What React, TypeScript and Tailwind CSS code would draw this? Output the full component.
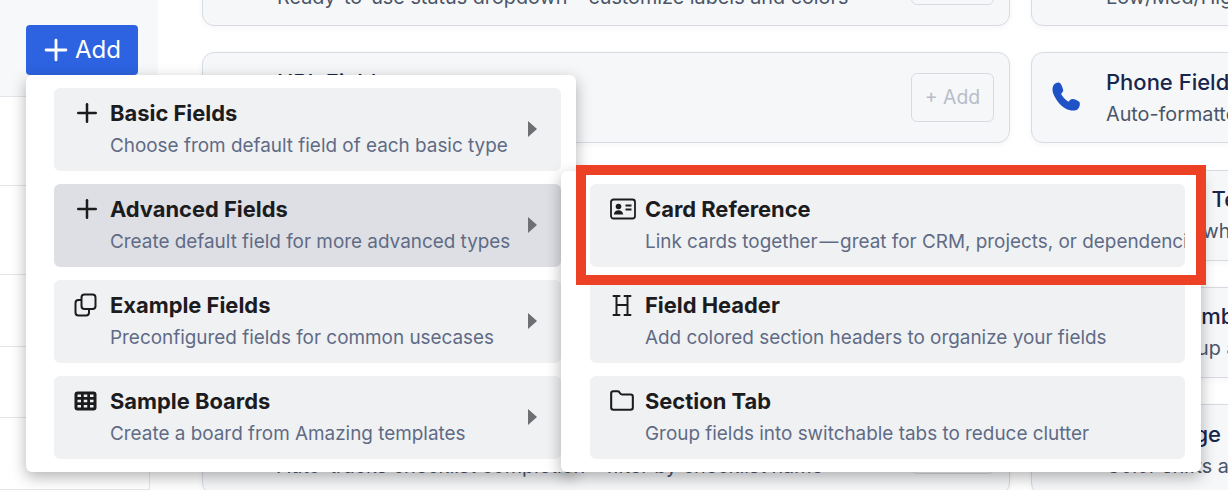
import React from 'react';
import { Plus, Folder } from 'lucide-react';

const CardIdIcon = () => (
  <svg width="26" height="22" viewBox="0 0 26 22" fill="none">
    <rect x="1" y="1.5" width="24" height="19" rx="2.5" stroke="currentColor" strokeWidth="1.8" />
    <circle cx="8.5" cy="8.5" r="2.8" fill="currentColor" />
    <path d="M3.8 16.5c.5-3 2.3-4.3 4.7-4.3s4.2 1.3 4.7 4.3z" fill="currentColor" />
    <path d="M15.5 7.5h6M15.5 11.5h6" stroke="currentColor" strokeWidth="1.8" />
  </svg>
);

const GridIcon = () => (
  <svg width="23" height="20" viewBox="0 0 23 20" fill="none">
    <rect x="0.5" y="0.5" width="22" height="19" rx="3" fill="currentColor" />
    <path d="M3.500 3.500h3.500v2.500H3.500zM9.750 3.500h3.500v2.500H9.750zM16 3.500h3.500v2.500H16zM3.500 8.750h3.500v2.500H3.500zM9.750 8.750h3.500v2.500H9.750zM16 8.750h3.500v2.500H16zM3.500 14h3.500v2.500H3.500zM9.750 14h3.500v2.500H9.750zM16 14h3.500v2.500H16z" fill="#f0f1f3" />
  </svg>
);

const CopyIcon = () => (
  <svg width="23" height="24" viewBox="0 0 23 24" fill="none" stroke="currentColor" strokeWidth="2">
    <rect x="7.500" y="1.500" width="14" height="14.500" rx="3" />
    <path d="M7 7H4.500A3 3 0 0 0 1.500 10v9.500a3 3 0 0 0 3 3h7.500a3 3 0 0 0 3-3V17" />
  </svg>
);

const SerifH = () => (
  <svg width="22" height="23" viewBox="0 0 22 23" fill="none" stroke="currentColor" strokeWidth="2" strokeLinecap="round">
    <path d="M5.500 2v19M16.500 2v19M5.500 11h11M2.500 2h6M13.500 2h6M2.500 21h6M13.500 21h6" />
  </svg>
);

const PhoneIcon = () => (
  <svg width="28" height="29" viewBox="0 0 27 28" fill="#1f51c7">
    <path d="M2 2.500C3.500 1 6 0 7.500 1C9 2 10.500 6 10.800 8C11 9.500 9.500 10.500 8.800 11.500C10 14 13 17.500 16 19C17 18 18 16.500 19.500 16.500C21.500 16.500 25.500 18 26.500 19.500C27.500 21 26.500 25 24.500 26.500C22.500 28 17 28 13 25.500C8 22.500 3 16.500 1 10.500C0 7.500 .5 4 2 2.500Z" />
  </svg>
);

type Row = { icon: React.ReactNode; title: string; desc: string; arrow?: boolean; active?: boolean };

const leftRows: Row[] = [
  { icon: <Plus size={30} strokeWidth={2} className="-ml-[2px] shrink-0" />, title: 'Basic Fields', desc: 'Choose from default field of each basic type', arrow: true },
  { icon: <Plus size={30} strokeWidth={2} className="-ml-[2px] shrink-0" />, title: 'Advanced Fields', desc: 'Create default field for more advanced types', arrow: true, active: true },
  { icon: <CopyIcon />, title: 'Example Fields', desc: 'Preconfigured fields for common usecases', arrow: true },
  { icon: <GridIcon />, title: 'Sample Boards', desc: 'Create a board from Amazing templates', arrow: true },
];

const rightRows: Row[] = [
  { icon: <CardIdIcon />, title: 'Card Reference', desc: 'Link cards together\u200a\u2014\u200agreat for CRM, projects, or dependencies' },
  { icon: <span className="pl-[1px]"><SerifH /></span>, title: 'Field Header', desc: 'Add colored section headers to organize your fields' },
  { icon: <Folder size={26} strokeWidth={1.9} className="-ml-[1px] shrink-0" />, title: 'Section Tab', desc: 'Group fields into switchable tabs to reduce clutter' },
];

const MenuRow = ({ row, sub }: { row: Row; sub?: boolean }) => (
  <div className={`relative h-[83px] overflow-hidden rounded-md pl-5 pt-[10px] ${row.active ? 'bg-[#dedfe4]' : 'bg-[#f0f1f3]'}`}>
    <div className="flex h-[30px] items-center text-[#1c1c1e]">
      <span className={`flex shrink-0 items-center ${sub ? 'w-[35px]' : 'w-[36px]'}`}>{row.icon}</span>
      <span className="text-[21.9px] font-bold leading-[30px]">{row.title}</span>
    </div>
    <div className={`mt-[3px] whitespace-nowrap text-[18.9px] leading-[30px] text-[#5f6b85] ${sub ? 'pl-[35px]' : 'pl-[36px]'}`}>{row.desc}</div>
    {row.arrow && <span className="absolute right-6 top-[33px] h-0 w-0 border-y-[8px] border-l-[9px] border-y-transparent border-l-[#6f6f73]" />}
  </div>
);

const cards = [
  { title: 'Status Field', desc: 'Ready-to-use status dropdown \u2013 customize labels and colors' },
  { title: 'Priority Field', desc: 'Low/Med/High priority labels' },
  { title: 'URL Field', desc: 'Clickable links' },
  { title: 'Phone Field', desc: 'Auto-formatted phone numbers', phone: true },
  { title: 'Email Field', desc: 'Validated addresses' },
  { title: 'Multi-line Text', desc: 'Show just when needed' },
  { title: 'Date Field', desc: 'Pick a day' },
  { title: 'Serial Number', desc: 'Numbers up automatically' },
  { title: 'Checklist Progress', desc: 'Auto-tracks checklist completion \u2013 filter by checklist name' },
  { title: 'Age Badge', desc: 'Color shifts as cards get older' },
];

const FieldCard = ({ title, desc, phone }: { title: string; desc: string; phone?: boolean }) => (
  <div className="flex h-[91px] items-center rounded-xl border border-[#d8dbe4] bg-[#f6f7f9] pr-[15px] shadow-[0_2px_6px_rgba(0,0,0,0.04)]">
    <div className="flex w-[74px] shrink-0 pb-[3px] pl-[20px]">{phone && <PhoneIcon />}</div>
    <div className="min-w-0 flex-1 overflow-hidden whitespace-nowrap">
      <div className="text-[22px] font-medium leading-[30px] text-[#17264a]">{title}</div>
      <div className="mt-[2px] text-[19.8px] leading-[30px] text-[#4a5568]">{desc}</div>
    </div>
    <button className="h-[49px] w-[83px] shrink-0 rounded-md border border-[#d9dbe3] text-[19.400px] text-[#b9bcc8]">+ Add</button>
  </div>
);

export default function App() {
  return (
    <div className="relative h-[490px] w-[1228px] overflow-hidden bg-white font-['Inter',sans-serif]">
      <div className="flex">
        <aside className="w-[158px] shrink-0">
          <div className="h-[97px] border-b border-[#e3e5ea] bg-[#f7f8fa] pl-[26px] pt-[25px]">
            <button className="flex h-[50px] w-[112px] items-center gap-[2px] rounded bg-[#2d63e0] pl-[13px] text-[24px] text-white">
              <Plus size={34} strokeWidth={2} className="shrink-0" />
              Add
            </button>
          </div>
          <div className="w-[150px] border-r border-[#e3e5ea]">
            <div className="h-[89px] border-b border-[#e3e5ea]" />
            <div className="h-[89px] border-b border-[#e3e5ea]" />
            <div className="h-[72px] border-b border-[#e3e5ea]" />
            <div className="h-[71px] border-b border-[#e3e5ea]" />
            <div className="h-[72px] border-b border-[#e3e5ea]" />
          </div>
        </aside>
        <main className="ml-[44px] mt-[-65px] grid w-[1100px] shrink-0 grid-cols-[808px_808px] gap-x-[21px] gap-y-[26.3px]">
          {cards.map((c) => (
            <FieldCard key={c.title} {...c} />
          ))}
        </main>
      </div>

      <div className="absolute left-[26px] top-[75px] flex w-[550px] flex-col gap-[13px] rounded-md bg-white py-[13px] pl-[28px] pr-[15px] text-[#1c1c1e] shadow-[0_5px_15px_rgba(0,0,0,0.3)]">
        {leftRows.map((r) => (
          <MenuRow key={r.title} row={r} />
        ))}
      </div>

      <div className="absolute left-[561px] top-[171px] flex w-[640px] flex-col gap-[13px] rounded-md bg-white py-[13px] pl-[29px] pr-[16px] text-[#1c1c1e] shadow-[0_5px_15px_rgba(0,0,0,0.3)]">
        {rightRows.map((r) => (
          <MenuRow key={r.title} row={r} sub />
        ))}
      </div>

      <div className="absolute left-[576px] top-[165px] h-[120px] w-[630px] border-[10px] border-[#ec4125]" />
    </div>
  );
}
